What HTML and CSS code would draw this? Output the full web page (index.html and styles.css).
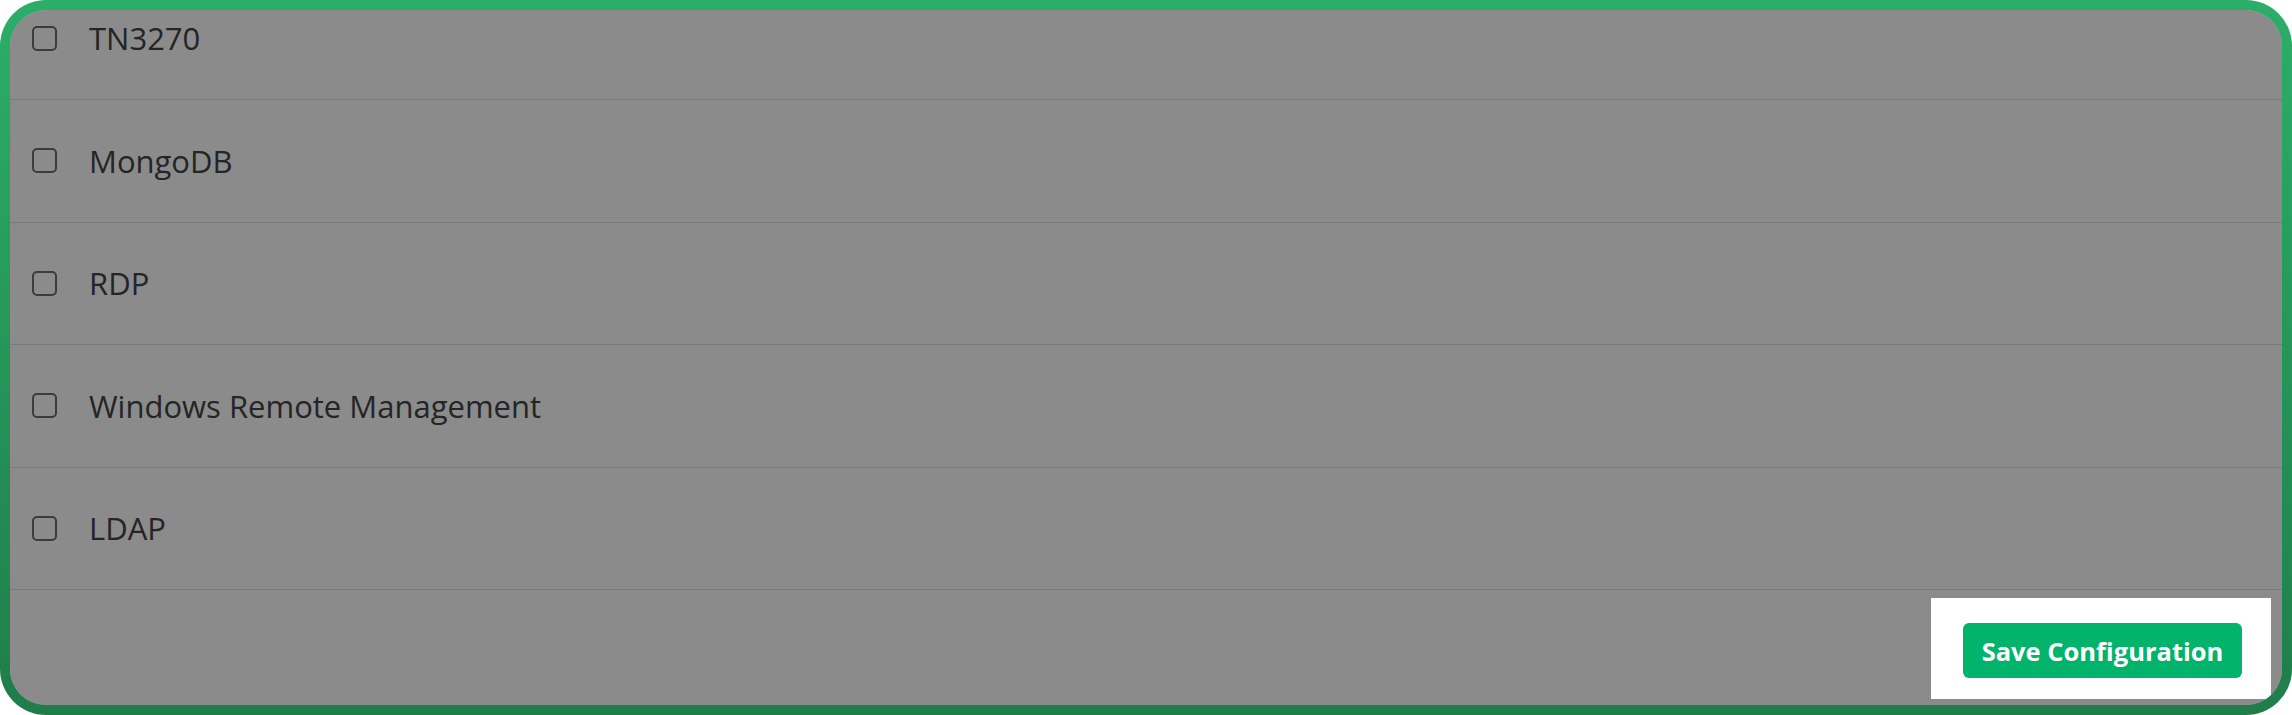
FILE: index.html
```html
<!DOCTYPE html>
<html lang="en">
<head>
    <meta charset="UTF-8">
    <meta name="viewport" content="width=device-width, initial-scale=1.0">
    <title>Protocol Configuration</title>
    <link rel="stylesheet" href="styles.css">
</head>
<body>
    <div class="frame">
        <div class="panel">
            <div class="protocol-list">
                <label class="protocol-row">
                    <input type="checkbox" name="protocol" value="tn3270">
                    <span>TN3270</span>
                </label>
                <label class="protocol-row">
                    <input type="checkbox" name="protocol" value="mongodb">
                    <span>MongoDB</span>
                </label>
                <label class="protocol-row">
                    <input type="checkbox" name="protocol" value="rdp">
                    <span>RDP</span>
                </label>
                <label class="protocol-row">
                    <input type="checkbox" name="protocol" value="winrm">
                    <span>Windows Remote Management</span>
                </label>
                <label class="protocol-row">
                    <input type="checkbox" name="protocol" value="ldap">
                    <span>LDAP</span>
                </label>
            </div>

            <div class="panel-footer">
                <!-- tour step: highlight the save button -->
                <div class="spotlight">
                    <button type="button" class="btn-save">Save Configuration</button>
                </div>
            </div>
        </div>
    </div>
</body>
</html>
```

FILE: styles.css
```css
html, body {
    margin: 0;
    padding: 0;
    height: 100%;
}
body {
    font-family: "Open Sans", "Noto Sans", Arial, sans-serif;
    background: #ffffff;
}
.frame {
    height: 100%;
    box-sizing: border-box;
    padding: 10px;
    border-radius: 46px;
    background: linear-gradient(to bottom, #2bae68, #1f7d49);
}
.panel {
    height: 100%;
    background: #ffffff;
    border-radius: 36px;
    overflow: hidden;
    display: flex;
    flex-direction: column;
}
/* list is scrolled down a little */
.protocol-list {
    margin-top: -32.5px;
}
.protocol-row {
    height: 122.5px;
    box-sizing: border-box;
    border-bottom: 1px solid #dedede;
    display: flex;
    align-items: center;
    gap: 32px;
    padding-left: 22px;
    font-size: 31px;
    color: #444444;
}
.protocol-row input {
    appearance: none;
    -webkit-appearance: none;
    width: 25px;
    height: 25px;
    margin: 0;
    border: 2px solid #6e6e6e;
    border-radius: 5px;
    background: #ffffff;
}
.panel-footer {
    flex: 1;
    display: flex;
    justify-content: flex-end;
    align-items: flex-start;
    padding: 8px 11px 0 0;
}
.spotlight {
    position: relative;
    z-index: 1;
    background: #ffffff;
    padding: 25px 29px 21px 32px;
    box-shadow: 0 0 0 3000px rgba(0, 0, 0, 0.455);
}
.btn-save {
    display: block;
    width: 279px;
    height: 55px;
    background: #02b36b;
    color: #ffffff;
    border: none;
    border-radius: 6px;
    font-family: "Open Sans", "Noto Sans", Arial, sans-serif;
    font-weight: bold;
    font-size: 25.5px;
    cursor: pointer;
}
```
